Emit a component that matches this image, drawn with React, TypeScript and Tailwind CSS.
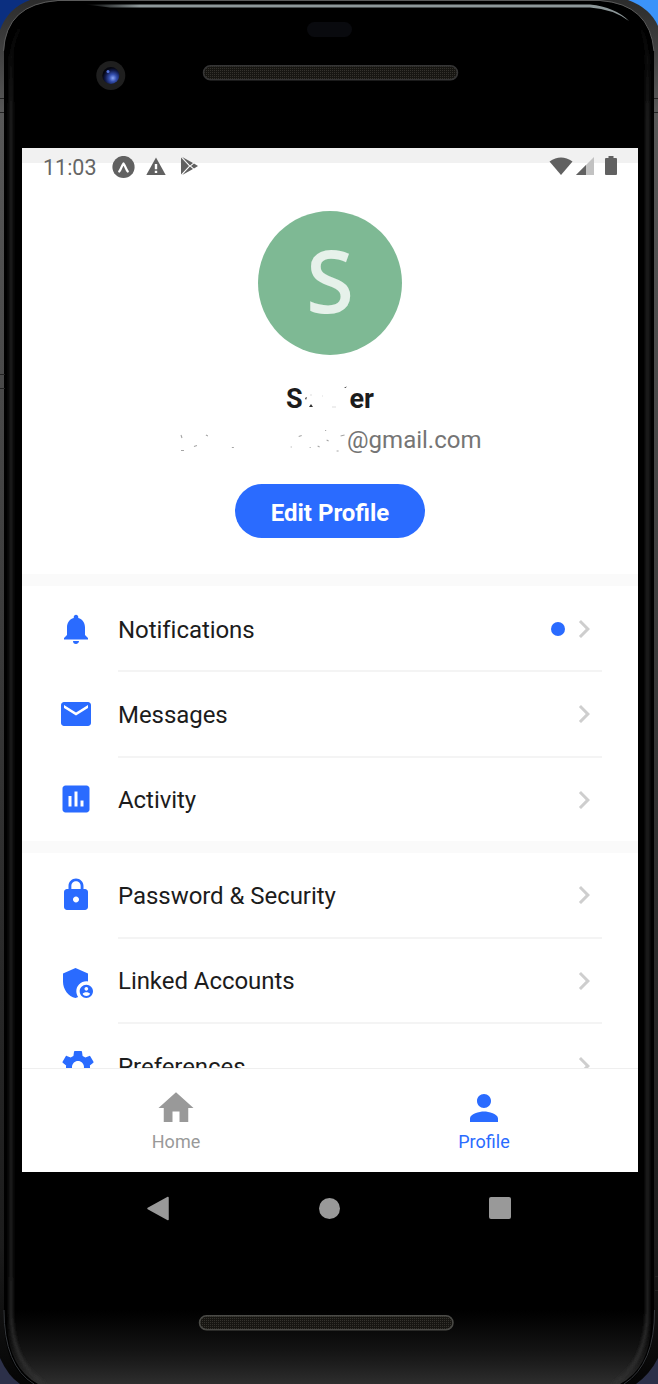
import React from "react";
import {
  MdNotifications,
  MdMail,
  MdInsertChart,
  MdLock,
  MdAdminPanelSettings,
  MdSettings,
  MdChevronRight,
  MdHome,
  MdPerson,
} from "react-icons/md";

function Bezel() {
  return (
    <svg className="absolute inset-0" width="658" height="1384" viewBox="0 0 658 1384">
      <defs>
        <linearGradient id="rim" x1="0" x2="0" y1="0" y2="1384" gradientUnits="userSpaceOnUse">
          <stop offset="0" stopColor="#2c2c2c" />
          <stop offset="0.08" stopColor="#585858" />
          <stop offset="0.3" stopColor="#484848" />
          <stop offset="0.6" stopColor="#303030" />
          <stop offset="0.9" stopColor="#1c1c1c" />
          <stop offset="1" stopColor="#050505" />
        </linearGradient>
        <linearGradient id="fade" x1="0" x2="0" y1="1310" y2="1384" gradientUnits="userSpaceOnUse">
          <stop offset="0" stopColor="#141414" stopOpacity="0" />
          <stop offset="0.5" stopColor="#161616" stopOpacity="0.8" />
          <stop offset="1" stopColor="#2e2e2e" />
        </linearGradient>
        <linearGradient id="glow" x1="0" x2="0" y1="15" y2="1384" gradientUnits="userSpaceOnUse">
          <stop offset="0" stopColor="#222" stopOpacity="0" />
          <stop offset="0.08" stopColor="#242424" />
          <stop offset="0.92" stopColor="#242424" />
          <stop offset="1" stopColor="#303030" />
        </linearGradient>
        <linearGradient id="shine" x1="85" x2="630" y1="0" y2="0" gradientUnits="userSpaceOnUse">
          <stop offset="0" stopColor="#8d9799" stopOpacity="0" />
          <stop offset="0.1" stopColor="#8d9799" />
          <stop offset="1" stopColor="#8d9799" />
        </linearGradient>
        <radialGradient id="lens" cx="0.62" cy="0.65" r="0.6">
          <stop offset="0" stopColor="#8ba6f5" />
          <stop offset="0.35" stopColor="#3550b0" />
          <stop offset="0.75" stopColor="#111a4a" />
          <stop offset="1" stopColor="#05060f" />
        </radialGradient>
        <pattern id="mesh" width="2" height="2" patternUnits="userSpaceOnUse">
          <rect width="2" height="2" fill="#171612" />
          <rect width="1" height="1" fill="#34322d" />
        </pattern>
        <filter id="soft" x="-5%" y="-5%" width="110%" height="110%">
          <feGaussianBlur stdDeviation="1.6" />
        </filter>
      </defs>
      <rect width="120" height="60" fill="#0b2f80" />
      <rect x="560" width="98" height="60" fill="#3b93fa" />
      <rect y="1320" width="658" height="64" fill="#2c3049" />
      <path d="M0 30 Q8 8 30 0 H628 Q650 8 658 26 V1358 Q650 1374 636 1384 H20 Q8 1376 0 1358Z" fill="url(#rim)" />
      <path d="M4 51 Q6 4 58 1 H600 Q650 4 654 51 V1320 Q654 1364 626 1384 H32 Q4 1366 4 1320Z" fill="#000" />
      <path d="M3.500 51 Q6 4 58 0.500 H600 Q650 4 654 51" fill="none" stroke="#5a5a5a" strokeWidth="1" />
      <path d="M7 1310 V1325 Q9 1368 38 1384 H620 Q650 1368 651 1325 V1310Z" fill="url(#fade)" />
      <path d="M11 1310 V60 Q13 22 42 9 M11 1310 Q11 1362 44 1384 M647.500 1310 V60 Q646 30 634 20 M647.500 1310 Q647 1362 614 1384" fill="none" stroke="url(#glow)" strokeWidth="3.500" filter="url(#soft)" />
      <path d="M85 4.500 H590 Q615 7 629 21 Q613 9 590 7.500 H110Z" fill="url(#shine)" />
      <path d="M4 1310 Q4 1366 34 1384 M654.500 1310 Q655 1364 624 1384" fill="none" stroke="#34373b" strokeWidth="1" />
      <path d="M0 98.500H4 M0 112.500H4 M654 98.500H658 M654 112.500H658 M0 374.500H5 M0 388.500H5 M655 1276.500H658 M655 1290.500H658" stroke="#222" />
      <rect x="307" y="22" width="45" height="15" rx="7.500" fill="#090a0e" />
      <circle cx="110.800" cy="75.500" r="14.500" fill="#1f1f1f" />
      <circle cx="110.800" cy="75.500" r="8.500" fill="url(#lens)" />
      <circle cx="108" cy="71.500" r="1.500" fill="#5573d8" />
      <rect x="203.500" y="65.700" width="254" height="14" rx="7" fill="url(#mesh)" stroke="#353535" strokeWidth="1.500" />
      <rect x="199.500" y="1315.700" width="253.500" height="14" rx="7" fill="url(#mesh)" stroke="#4a4a46" strokeWidth="1.500" />
    </svg>
  );
}

function StatusBar() {
  return (
    <div className="flex h-[38px] shrink-0 items-center bg-linear-to-b from-[#f1f1f1] from-[15px] to-white to-[15px] pl-[21px] pr-[21px] text-[#666]">
      <span className="w-[69px] pt-px text-[21.5px] leading-none">11:03</span>
      <svg width="23" height="23" viewBox="0 0 23 23">
        <circle cx="11.500" cy="11" r="11.100" fill="#616161" />
        <path d="M7.200 15.500 C9 13.500 10 9 11.500 7.500 C13 9 14 13.500 15.800 15.500" fill="none" stroke="#fff" strokeWidth="2.200" strokeLinecap="round" strokeLinejoin="round" />
      </svg>
      <svg className="-mt-[2px] ml-[11px]" width="20" height="19" viewBox="0 0 20 19">
        <path d="M10 0.500 L19.700 18 H0.300Z" fill="#616161" />
        <path d="M8.800 7 H11.200 V12.200 H8.800Z M8.800 13.800 H11.200 V16 H8.800Z" fill="#fff" />
      </svg>
      <svg className="-mt-[2px] ml-[14px]" width="18" height="18" viewBox="0 0 18 18">
        <path d="M1 0.500 V17.500 L9 9Z M2.200 0 L13 6 L10 8.500Z M2.200 18 L13 12 L10 9.500Z M14 6.500 L18 9 L14 11.500 L11 9Z" fill="#616161" />
      </svg>
      <div className="ml-auto flex items-center pb-[3px]">
        <svg width="24" height="18" viewBox="0 0 24 18">
          <path d="M0.500 4.500 Q12 -3.500 23.500 4.500 L12 18Z" fill="#616161" />
        </svg>
        <svg className="ml-[3px] mt-px" width="18" height="18" viewBox="0 0 18 18">
          <path d="M18 0 V18 H0Z" fill="#c2c2c2" />
          <path d="M10 8 V18 H0Z" fill="#616161" />
        </svg>
        <svg className="ml-[11px]" width="12" height="19" viewBox="0 0 12 19">
          <path d="M3.500 0 H8.500 V2 H11 Q12 2 12 3 V18 Q12 19 11 19 H1 Q0 19 0 18 V3 Q0 2 1 2 H3.500Z" fill="#616161" />
        </svg>
      </div>
    </div>
  );
}

function Row({ icon, label, dot, first, className = "h-[86px]" }: { icon: React.ReactNode; label: string; dot?: boolean; first?: boolean; className?: string }) {
  return (
    <div className={`flex shrink-0 pl-9 pr-9 ${className}`}>
      <div className="flex w-[60px] shrink-0 items-center text-[#2a6bff]">{icon}</div>
      <div className={`flex flex-1 items-center ${first ? "" : "border-t-2 border-[#f4f4f4]"}`}>
        <span className={`flex-1 text-[24px] leading-7 tracking-[-0.05px] text-[#1c1c1c] ${first ? "pt-[2px]" : "pt-px"}`}>{label}</span>
        {dot && <span className="mr-[1px] size-[14px] rounded-full bg-[#2a6bff]" />}
        <MdChevronRight className="size-9 text-[#cecece]" />
      </div>
    </div>
  );
}

export default function App() {
  return (
    <div className="relative h-[1384px] w-[658px] overflow-hidden bg-black font-['Roboto',sans-serif]">
      <Bezel />
      <div className="relative flex h-full flex-col pl-[22px] pr-[20px] pt-[148px]">
        <div className="flex h-[1024px] shrink-0 flex-col overflow-hidden bg-white">
          <StatusBar />
          <div className="flex h-[388px] shrink-0 flex-col items-center pt-[25px]">
            <div className="flex size-[144px] items-center justify-center rounded-full bg-[#7eb994] pb-[7px] font-['Noto_Sans',sans-serif] text-[84px] leading-none text-[#e6f1ea] [-webkit-text-stroke:2px_#e6f1ea]">
              S
            </div>
            <div className="mt-[28px] flex h-8 w-[88px] items-center text-[27px] font-bold leading-8 text-[#1c1c1c]">
              <span>S</span>
              <svg className="ml-auto" width="46" height="32" viewBox="0 0 46 32">
                <path d="M1 15 l2 -1 -1 3Z M5 24 l2 -3 2 3Z M40 4.500 l3 -1 -1.500 1.500Z" fill="#333" />
                <path d="M6 12h2 M18 13h1 M28 24h4" stroke="#ddd" />
              </svg>
              <span>er</span>
            </div>
            <div className="mt-[11px] flex h-7 w-[303px] items-center text-[24px] leading-7 text-[#757575]">
              <svg width="169" height="28" viewBox="0 0 169 28">
                <path d="M2 9 l1 3 M2 24.500h3 M15 20.500l3 -1 M27 9l2 1 M53 21.500h2 M120 10.500l3 -1 M112 21h1 M131 21.500h1 M148 14l2 1 M147 4v1 M162 10l4 -1 M158 25h2 M139 20l2 1" fill="none" stroke="#a5a5a5" strokeWidth="1.100" />
              </svg>
              <span>@gmail.com</span>
            </div>
            <div className="mt-[30px] flex h-[54px] w-[190px] items-center justify-center rounded-full bg-[#2a6bff] pt-[3px] text-[24px] font-bold text-white">
              Edit Profile
            </div>
          </div>
          <div className="h-3 shrink-0 bg-[#fafafa]" />
          <Row first className="h-[84px] pt-px" label="Notifications" dot icon={<MdNotifications className="size-9" />} />
          <Row label="Messages" icon={<MdMail className="mt-[2px] size-9" />} />
          <Row className="h-[85px]" label="Activity" icon={<MdInsertChart className="size-9" />} />
          <div className="h-3 shrink-0 bg-[#fafafa]" />
          <Row first className="h-[84px]" label="Password & Security" icon={<MdLock className="size-9" />} />
          <Row className="h-[85px]" label="Linked Accounts" icon={<MdAdminPanelSettings className="mt-[6px] size-10" />} />
          <div className="flex h-[46px] shrink-0 flex-col overflow-hidden">
            <Row label="Preferences" icon={<MdSettings className="mt-[4px] size-10" />} />
          </div>
          <div className="flex h-[104px] shrink-0 border-t border-[#efefef] text-[18px]">
            <div className="flex flex-1 flex-col items-center pt-[18px] text-[#999]">
              <MdHome className="size-[42px]" />
              <span className="mt-px leading-6">Home</span>
            </div>
            <div className="flex flex-1 flex-col items-center pt-[18px] text-[#2a6bff]">
              <MdPerson className="size-[42px]" />
              <span className="mt-px leading-6">Profile</span>
            </div>
          </div>
        </div>
        <div className="flex h-[72px] items-center pl-[124px]">
          <svg width="23" height="25" viewBox="0 0 23 25">
            <path d="M22 1.500 V23.500 L2 12.500Z" fill="#999" stroke="#999" strokeWidth="1.500" strokeLinejoin="round" />
          </svg>
          <span className="ml-[150px] size-[21px] rounded-full bg-[#999]" />
          <span className="ml-[149px] size-[22px] rounded-[2px] bg-[#999]" />
        </div>
      </div>
    </div>
  );
}
